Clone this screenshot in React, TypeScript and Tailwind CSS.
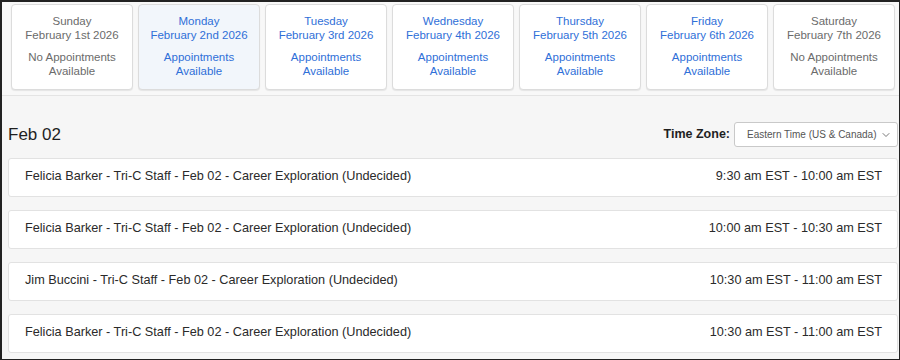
import React from 'react';
import { ChevronDown } from 'lucide-react';

interface Day {
  name: string;
  date: string;
  available: boolean;
  selected?: boolean;
}

const days: Day[] = [
  { name: 'Sunday', date: 'February 1st 2026', available: false },
  { name: 'Monday', date: 'February 2nd 2026', available: true, selected: true },
  { name: 'Tuesday', date: 'February 3rd 2026', available: true },
  { name: 'Wednesday', date: 'February 4th 2026', available: true },
  { name: 'Thursday', date: 'February 5th 2026', available: true },
  { name: 'Friday', date: 'February 6th 2026', available: true },
  { name: 'Saturday', date: 'February 7th 2026', available: false },
];

const slots = [
  { title: 'Felicia Barker - Tri-C Staff - Feb 02 - Career Exploration (Undecided)', time: '9:30 am EST - 10:00 am EST' },
  { title: 'Felicia Barker - Tri-C Staff - Feb 02 - Career Exploration (Undecided)', time: '10:00 am EST - 10:30 am EST' },
  { title: 'Jim Buccini - Tri-C Staff - Feb 02 - Career Exploration (Undecided)', time: '10:30 am EST - 11:00 am EST' },
  { title: 'Felicia Barker - Tri-C Staff - Feb 02 - Career Exploration (Undecided)', time: '10:30 am EST - 11:00 am EST' },
];

const App: React.FC = () => {
  return (
    <div className="w-[900px] h-[360px] overflow-hidden bg-[#f6f6f6] border border-l-2 border-t-2 border-[#222] font-['Liberation_Sans',Arial,sans-serif]">
      {/* day picker */}
      <div className="flex gap-[5px] pl-[9px] pr-[3px] pt-[2px] pb-[5px] bg-[#f8f8f8] border-b border-[#e4e4e4]">
        {days.map((d) => (
          <div
            key={d.name}
            className={`w-[122px] h-[86px] shrink-0 rounded-[4px] border border-[#dcdcdc] shadow-[0_1px_1px_rgba(0,0,0,0.08)] flex flex-col items-center pt-[10px] text-[11.5px] leading-[13.5px] text-center ${
              d.selected ? 'bg-[#f2f6fb]' : 'bg-white'
            } ${d.available ? 'text-[#2f6fd8]' : 'text-[#6b6b6b]'}`}
          >
            <div>{d.name}</div>
            <div>{d.date}</div>
            <div className="mt-[9px]">{d.available ? 'Appointments' : 'No Appointments'}</div>
            <div>Available</div>
          </div>
        ))}
      </div>

      {/* header */}
      <div className="flex items-center justify-between pl-[6px] pr-[1px] mt-[26px]">
        <h2 className="text-[17px] text-[#1f1f1f]">Feb 02</h2>
        <div className="flex items-center gap-[4px]">
          <span className="text-[12.5px] font-bold text-[#1f1f1f]">Time Zone:</span>
          <div className="w-[164px] h-[25px] bg-white border border-[#c9c9c9] rounded-[3px] flex items-center justify-between pl-[12px] pr-[5px]">
            <span className="text-[10px] text-[#555] whitespace-nowrap">Eastern Time (US &amp; Canada)</span>
            <ChevronDown size={12} strokeWidth={1.6} className="text-[#555]" />
          </div>
        </div>
      </div>

      {/* slots */}
      <div className="flex flex-col gap-[13px] pl-[6px] pr-[1px] mt-[10px]">
        {slots.map((s, i) => (
          <div
            key={i}
            className="h-[39px] bg-white border border-[#e2e2e2] rounded-[3px] flex items-center justify-between pl-[16px] pr-[15px] text-[12.7px] text-[#2a2a2a]"
          >
            <span>{s.title}</span>
            <span>{s.time}</span>
          </div>
        ))}
      </div>
    </div>
  );
};

export default App;
